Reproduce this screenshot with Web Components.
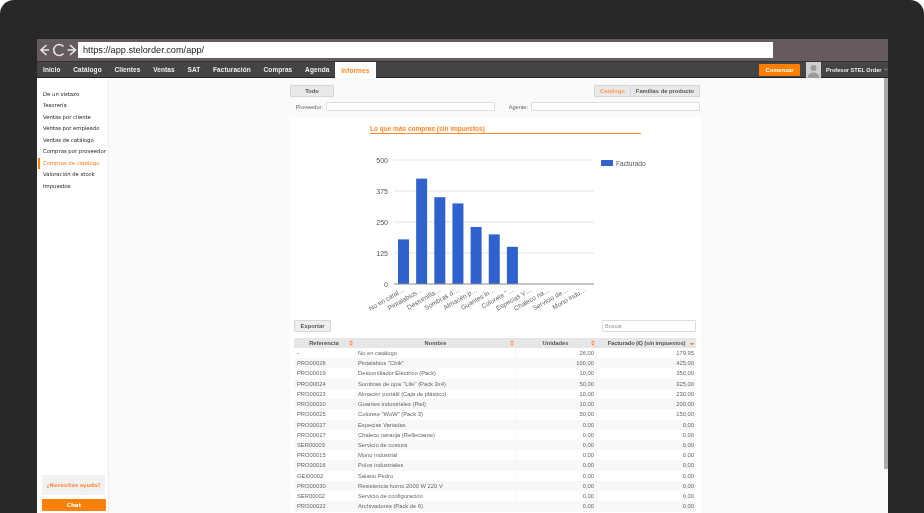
<!DOCTYPE html>
<html lang="es"><head><meta charset="utf-8"><title>Informes</title>
<style>
html,body{margin:0;padding:0;background:#fff;height:513px;overflow:hidden}
body{font-family:"Liberation Sans",Arial,sans-serif}
</style></head><body>
<x-device>
  <x-browserbar url="https://app.stelorder.com/app/"></x-browserbar>
  <x-navbar></x-navbar>
  <x-workspace>
    <x-sidebar></x-sidebar>
    <x-report></x-report>
  </x-workspace>
</x-device>
<script>
function def(name, css, html){
  customElements.define(name, class extends HTMLElement{
    connectedCallback(){
      if(this.shadowRoot) return;
      const r=this.attachShadow({mode:'open'});
      r.innerHTML='<style>'+css+'</style>'+(typeof html==='function'?html(this):html);
    }
  });
}
def('x-device',`
:host{display:block;box-sizing:border-box;width:924px;height:513px;background:#282828;border-radius:14px 14px 0 0;padding:39px 36px 0 37px;overflow:hidden}
.screen{height:474px;display:flex;flex-direction:column;filter:blur(.4px)}
`,`<div class="screen"><slot></slot></div>`);

def('x-browserbar',`
:host{display:flex;align-items:center;height:22px;background:#655a5e;box-sizing:border-box;padding:0 115px 0 1px}
svg{display:block;flex:none}
.url{flex:1;height:16px;background:#fff;margin-left:1px;display:flex;align-items:center;padding-left:5px;
 font:9.200px "Liberation Sans",sans-serif;color:#222;box-sizing:border-box}
`,h=>`<svg width="39" height="16" viewBox="0 0 39 16" fill="none" stroke="#e8e6e6" stroke-width="1.6">
<path d="M8.500 3 3 8l5.500 5M3 8h8"/>
<path d="M25.500 4.500a5.500 5.500 0 1 0 0 7"/>
<path d="M32 3l5.500 5-5.500 5M37.500 8h-8"/></svg><div class="url">${h.getAttribute('url')}</div>`);

def('x-navbar',`
:host{display:flex;align-items:stretch;height:17px;background:#444;border-top:1px solid #333;box-sizing:border-box;border-bottom:1px solid #222;
 font:bold 6.500px "Liberation Sans",sans-serif;letter-spacing:.08px;color:#eee}
.tabs{display:flex;flex:1;padding-left:6px}
.tabs span{display:flex;align-items:center;margin-right:12.800px;white-space:nowrap}
.tabs .on{background:#fff;color:#ff8a2a;padding:0 0 0 6px;margin:0 0 -1px -7px;width:41px;flex:none;box-sizing:border-box}
.go{align-self:center;width:41px;height:12px;background:#ff8000;color:#fff;display:flex;align-items:center;justify-content:center;font-size:5.800px;letter-spacing:0;margin-right:6px;border-radius:1px}
.user{display:flex;align-items:center;width:82px;font-size:5.600px;letter-spacing:0;white-space:nowrap}
.ava{width:15px;height:16px;background:#c9c9c9;margin-right:5px;flex:none;display:block}
.chev{margin-left:2px;flex:none}
`,`<div class="tabs"><span>Inicio</span><span>Catálogo</span><span>Clientes</span><span>Ventas</span><span>SAT</span><span>Facturación</span><span>Compras</span><span>Agenda</span><span class="on">Informes</span></div>
<div class="go">Comenzar</div>
<div class="user"><svg class="ava" viewBox="0 0 15 16"><rect width="15" height="16" fill="#cfcfcf"/><circle cx="7.500" cy="6" r="3" fill="#9a9a9a"/><path d="M1.500 16c.5-4 3-5.500 6-5.500s5.500 1.500 6 5.500z" fill="#9a9a9a"/></svg>Profesor STEL Order<svg class="chev" width="4" height="3" viewBox="0 0 4 3" fill="none" stroke="#ff8a2a" stroke-width=".8"><path d="M.3.500 2 2.300 3.700.500"/></svg></div>`);

def('x-workspace',`
:host{display:flex;flex:1;min-height:0;background:#fafafa;overflow:hidden}
.bar{flex:none;width:4px;height:391px;background:#a9a9a9}
`,`<slot></slot><div class="bar"></div>`);

def('x-sidebar',`
:host{display:flex;flex-direction:column;width:72px;flex:none;box-sizing:border-box;background:#fff;border-right:1px solid #eee;
 font:5.300px "DejaVu Sans",sans-serif;color:#222;padding:10.500px 0 2px 1px}
a{display:block;height:11.550px;line-height:11.550px;padding-left:3px;border-left:2px solid transparent;white-space:nowrap;color:#222}
a.on{color:#ff7a10;border-left-color:#ff8000}
.sp{flex:1}
.help{margin:0 3px 0 4px;height:20px;background:#f2f2f2;border-radius:1px;display:flex;align-items:center;justify-content:center;color:#ff8a3a;font-weight:bold;font-size:5.200px;white-space:nowrap}
.chat{margin:4px 2px 0 4px;height:12px;background:#ff8000;color:#fff;font-weight:bold;display:flex;align-items:center;justify-content:center;border-radius:1px;font-size:5.500px}
`,`<a>De un vistazo</a><a>Tesorería</a><a>Ventas por cliente</a><a>Ventas por empleado</a><a>Ventas de catálogo</a><a>Compras por proveedor</a><a class="on">Compras de catálogo</a><a>Valoración de stock</a><a>Impuestos</a>
<div class="sp"></div><div class="help">¿Necesitas ayuda?</div><div class="chat">Chat</div>`);

def('x-report',`
:host{display:flex;flex:1;min-width:0;font:5.800px "Liberation Sans",sans-serif;color:#555}
.col{width:411px;margin-left:181px;display:flex;flex-direction:column;padding-top:7px;box-sizing:content-box}
.tools{display:flex;justify-content:space-between;height:12px}
.btn{height:12px;box-sizing:border-box;background:#e9e9e9;border:1px solid #d6d6d6;border-radius:1px;display:flex;align-items:center;justify-content:center;font-weight:bold;color:#555;font-size:5.800px;white-space:nowrap}
.seg{display:flex;margin-right:1px}
.filters{display:flex;align-items:center;margin-top:5px;height:9px;padding-right:1px}
.filters label{font-size:5.600px;color:#666;text-align:right;flex:none}
.inp{height:9px;box-sizing:border-box;border:1px solid #ddd;border-radius:1px;background:#fff;flex:none}
.panel{margin-top:6px;background:#fff;padding:8px 5px 0 4px;flex:1;min-height:0}
.title{margin-left:76px;width:271px;border-bottom:1px solid #ff8a2a;font-weight:bold;font-size:6.500px;color:#ff8a2a;height:8px;line-height:8px;white-space:nowrap;box-sizing:content-box}
.actions{display:flex;justify-content:space-between;height:12px}
.search{width:94px;height:12px;box-sizing:border-box;border:1px solid #ddd;background:#fff;border-radius:1px;font:5.500px "Liberation Sans",sans-serif;color:#999;display:flex;align-items:center;padding-left:2px}
x-chart{display:block}
x-table{display:block;margin-top:6px}
`,`<div class="col">
<div class="tools"><div class="btn" style="width:44px">Todo</div>
<div class="seg"><div class="btn" style="width:37px;color:#ff9a50">Catálogo</div><div class="btn" style="width:69px;border-left:0">Familias de producto</div></div></div>
<div class="filters"><label style="width:33px">Proveedor:</label><div class="inp" style="width:169px;margin-left:3px"></div><label style="width:33px">Agente:</label><div class="inp" style="width:169px;margin-left:3px"></div></div>
<div class="panel"><div class="title">Lo que más compras (sin impuestos)</div>
<x-chart></x-chart>
<div class="actions"><div class="btn" style="width:37px;background:#eee">Exportar</div><div class="search">Buscar</div></div>
<x-table></x-table></div></div>`);

const vals=[179.95,425,350,325,230,200,150];
const labs=['No en catal…','Pintalabios…','Destornilla…','Sombras d…','Almacén p…','Guantes in…','Colorete "…','Especias V…','Chaleco na…','Servicio de…','Mono indu…'];
def('x-chart',`
:host{display:block;height:186px}
svg{display:block;font-family:"Liberation Sans",Arial,sans-serif}
`,()=>{
  let s='<svg width="402" height="186" viewBox="294 134 402 186">';
  [[160,'500'],[191,'375'],[222,'250'],[253,'125'],[284,'0']].forEach(([y,t])=>{
    if(y<284) s+=`<rect x="394" y="${y-.5}" width="200" height="1" fill="#e6e6e6"/>`;
    s+=`<text x="388" y="${y+2.500}" text-anchor="end" font-size="7" fill="#555">${t}</text>`;
  });
  vals.forEach((v,i)=>{const h=v*124/500,x=398+i*18.15;
    s+=`<rect x="${x}" y="${284-h}" width="11" height="${h}" fill="#2f62cc"/>`;});
  s+='<rect x="394" y="283.500" width="200" height="1" fill="#8a8a8a"/>';
  labs.forEach((t,i)=>{const x=405+i*18.15;
    s+=`<text transform="translate(${x} 291) rotate(-30)" text-anchor="end" font-size="6.600" fill="#666">${t}</text>`;});
  s+='<rect x="601" y="160" width="12" height="6" fill="#2f62cc"/><text x="616" y="165.500" font-size="6.600" fill="#555">Facturado</text></svg>';
  return s;
});

const rows=[['-','No en catálogo','26,00','179,95'],['PRO00026','Pintalabios "Chik"','100,00','425,00'],['PRO00019','Destornillador Eléctrico (Pack)','10,00','350,00'],['PRO00024','Sombras de ojos "Life" (Pack 3x4)','50,00','325,00'],['PRO00023','Almacén portátil (Caja de plástico)','10,00','230,00'],['PRO00020','Guantes industriales (Piel)','10,00','200,00'],['PRO00025','Colorete "WoW" (Pack 3)','50,00','150,00'],['PRO00027','Especias Variadas','0,00','0,00'],['PRO00017','Chaleco naranja (Reflectante)','0,00','0,00'],['SER00003','Servicio de costura','0,00','0,00'],['PRO00015','Mono industrial','0,00','0,00'],['PRO00016','Polos industriales','0,00','0,00'],['GEI00002','Salario Pedro','0,00','0,00'],['PRO00030','Resistencia horno 2000 W 220 V','0,00','0,00'],['SER00002','Servicio de configuración','0,00','0,00'],['PRO00022','Archivadores (Pack de 6)','0,00','0,00']];
const sort=(c='#ff9a50')=>`<svg width="4" height="6" viewBox="0 0 4 6" fill="${c}"><path d="M2 0 4 2.400H0zM2 6 0 3.600H4z"/></svg>`;
def('x-table',`
:host{display:block;font:5.800px "Liberation Sans",sans-serif;color:#666}
.r{display:grid;grid-template-columns:61px 161px 81px 99px;height:10.220px;line-height:10.220px}
.r>div{padding:0 3px;white-space:nowrap;overflow:hidden;border-right:1px solid #f6f6f6;box-sizing:border-box}
.r>div:last-child{border-right:0}
.n{text-align:right;padding-right:2px!important}
.h{background:#e6e6e6;height:10px;font:bold 5.800px "Liberation Sans",sans-serif;color:#555}
.h>div{display:flex;align-items:center;justify-content:space-between;border-right:0;padding:0 2px 0 5px}
.h>div:nth-child(2){padding-left:6px}
.h>div:nth-child(3){padding-left:4px}
.h>div:nth-child(4){letter-spacing:-.12px;padding-left:6px}
.h span{flex:1;text-align:center;white-space:nowrap}
.body .r:nth-child(even){background:#f8f8f8}
.body .r:nth-child(odd){background:#fff}
`,()=>`<div class="r h"><div><span>Referencia</span>${sort()}</div><div><span>Nombre</span>${sort()}</div><div><span>Unidades</span>${sort()}</div><div><span>Facturado (€) (sin impuestos)</span><svg width="4" height="6" viewBox="0 0 4 6" fill="#ff7a10"><path d="M0 3H4L2 5.500z"/></svg></div></div>
<div class="body">${rows.map(r=>`<div class="r"><div>${r[0]}</div><div>${r[1]}</div><div class="n">${r[2]}</div><div class="n">${r[3]}</div></div>`).join('')}</div>`);
</script>
</body></html>
